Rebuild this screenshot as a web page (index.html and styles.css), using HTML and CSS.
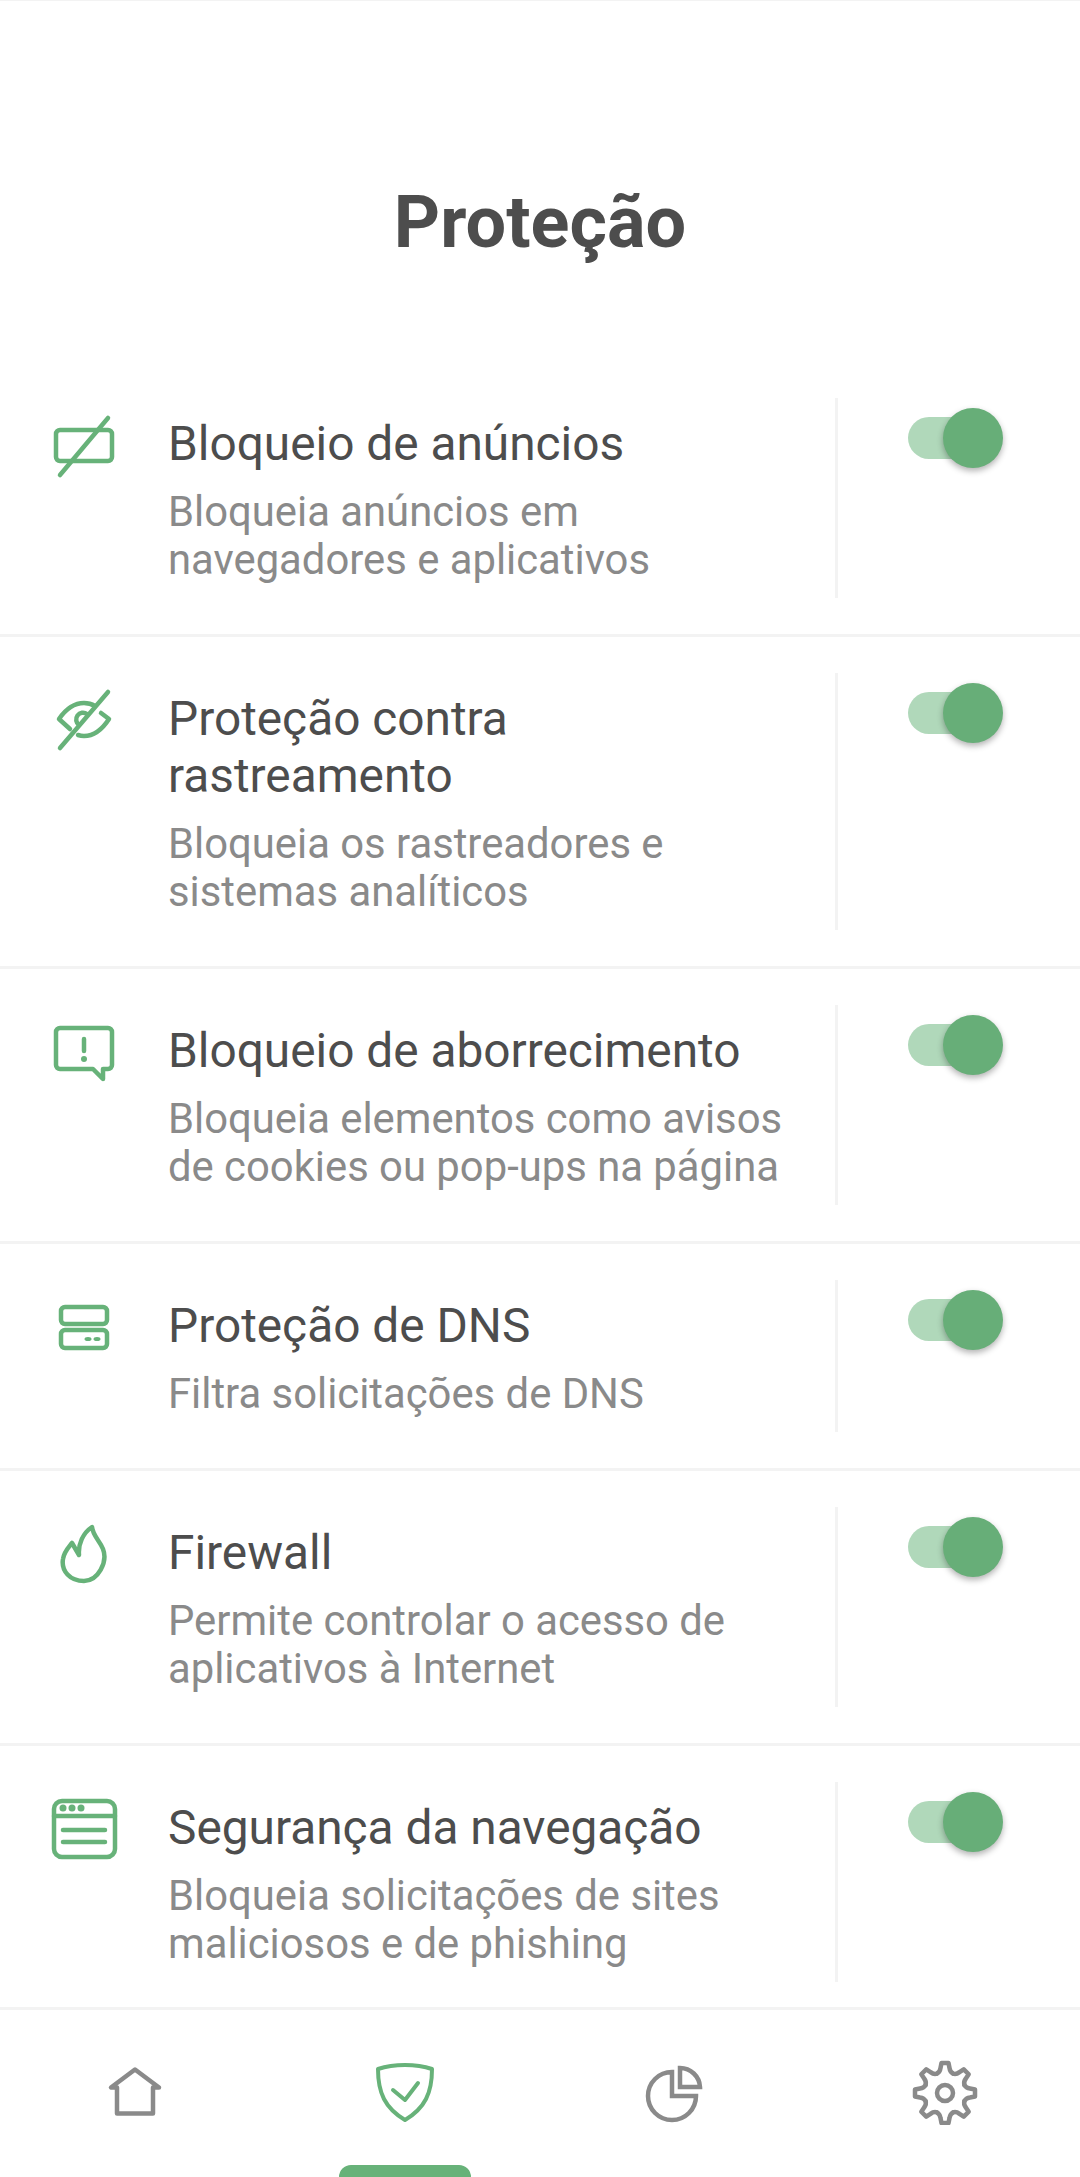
FILE: index.html
```html
<!DOCTYPE html>
<html lang="pt">
<head>
  <meta charset="UTF-8">
  <title>Proteção</title>
  <meta name="viewport" content="width=device-width, initial-scale=1">
  <link rel="stylesheet" href="styles.css">
</head>
<body>

  <div class="screen">
    <h1 class="page-title">Proteção</h1>

    <div class="list">
      <!-- Ad blocking -->
      <div class="row">
        <div class="row-icon">
          <svg class="icon" viewBox="0 0 72 72">
            <rect x="8" y="21" width="56" height="31" rx="4"/>
            <path d="M12 66L60 9"/>
          </svg>
        </div>
        <div class="row-text">
          <div class="row-title">Bloqueio de anúncios</div>
          <div class="row-desc">Bloqueia anúncios em navegadores e aplicativos</div>
        </div>
        <div class="row-switch">
          <div class="switch"><div class="switch-thumb"></div></div>
        </div>
      </div>

      <!-- Tracking -->
      <div class="row">
        <div class="row-icon">
          <svg class="icon" viewBox="0 0 72 72">
            <path d="M22 45L11 35Q22 19 36 19Q42 19 47 22"/>
            <path d="M53 29L61 35Q50 52 36 52Q33 52 30 51"/>
            <path d="M31 41A6.500 6.500 0 0 1 39 30"/>
            <path d="M12 64L60 8"/>
          </svg>
        </div>
        <div class="row-text">
          <div class="row-title">Proteção contra rastreamento</div>
          <div class="row-desc">Bloqueia os rastreadores e sistemas analíticos</div>
        </div>
        <div class="row-switch">
          <div class="switch"><div class="switch-thumb"></div></div>
        </div>
      </div>

      <!-- Annoyances -->
      <div class="row">
        <div class="row-icon">
          <svg class="icon" viewBox="0 0 72 72">
            <path d="M12 12H60A4 4 0 0 1 64 16V49A4 4 0 0 1 60 53H55V63L45 53H12A4 4 0 0 1 8 49V16A4 4 0 0 1 12 12Z"/>
            <path d="M36 23V35"/>
            <circle class="icon-dot" cx="36" cy="43" r="3"/>
          </svg>
        </div>
        <div class="row-text">
          <div class="row-title">Bloqueio de aborrecimento</div>
          <div class="row-desc">Bloqueia elementos como avisos de cookies ou pop-ups na página</div>
        </div>
        <div class="row-switch">
          <div class="switch"><div class="switch-thumb"></div></div>
        </div>
      </div>

      <!-- DNS -->
      <div class="row">
        <div class="row-icon">
          <svg class="icon" viewBox="0 0 72 72">
            <rect x="13" y="16" width="46" height="17" rx="4"/>
            <rect x="13" y="39" width="46" height="18" rx="4"/>
            <ellipse class="icon-dot" cx="40" cy="48" rx="3.500" ry="2"/>
            <ellipse class="icon-dot" cx="49" cy="48" rx="3.500" ry="2"/>
          </svg>
        </div>
        <div class="row-text">
          <div class="row-title">Proteção de DNS</div>
          <div class="row-desc">Filtra solicitações de DNS</div>
        </div>
        <div class="row-switch">
          <div class="switch"><div class="switch-thumb"></div></div>
        </div>
      </div>

      <!-- Firewall -->
      <div class="row">
        <div class="row-icon">
          <svg class="icon" viewBox="0 0 72 72">
            <path d="M24 25L31 37C30 26 35 15 44 9C45 18 52 23 55 31C60 44 50 63 36 63C22 63 13 53 15 41C16 34 20 30 24 25Z"/>
          </svg>
        </div>
        <div class="row-text">
          <div class="row-title">Firewall</div>
          <div class="row-desc">Permite controlar o acesso de aplicativos à Internet</div>
        </div>
        <div class="row-switch">
          <div class="switch"><div class="switch-thumb"></div></div>
        </div>
      </div>

      <!-- Browsing security -->
      <div class="row">
        <div class="row-icon">
          <svg class="icon" viewBox="0 0 72 72">
            <rect x="6" y="8" width="61" height="56" rx="8"/>
            <path d="M6 23H67"/>
            <circle class="icon-dot" cx="15" cy="15" r="3.500"/>
            <circle class="icon-dot" cx="24" cy="15" r="3.500"/>
            <circle class="icon-dot" cx="33" cy="15" r="3.500"/>
            <path d="M15 37H57M15 49H57"/>
          </svg>
        </div>
        <div class="row-text">
          <div class="row-title">Segurança da navegação</div>
          <div class="row-desc">Bloqueia solicitações de sites maliciosos e de phishing</div>
        </div>
        <div class="row-switch">
          <div class="switch"><div class="switch-thumb"></div></div>
        </div>
      </div>
    </div>

    <div class="tabbar">
      <div class="tab">
        <svg class="icon icon-grey" viewBox="0 0 72 72">
          <path d="M12 34.500H18V60.500H54V34.500H60L36 16.500Z"/>
        </svg>
      </div>
      <div class="tab tab-active">
        <svg class="icon icon-shield" viewBox="0 0 72 72">
          <path d="M9 16C18 13 27 12 36 12C45 12 54 13 63 16C63 40 56 55 36 67C16 55 9 40 9 16Z"/>
          <path d="M24 37L36 47L49 30"/>
        </svg>
      </div>
      <div class="tab">
        <svg class="icon icon-grey icon-miter" viewBox="0 0 72 72">
          <path d="M33 19A24 24 0 1 0 57 43H33Z"/>
          <path d="M41 15A20 20 0 0 1 61 34H41Z"/>
        </svg>
      </div>
      <div class="tab">
        <svg class="icon icon-grey" viewBox="0 0 72 72">
          <defs>
            <path id="gearTooth" d="M27.960 20.600Q31 19 31.500 15L32.500 10H39.500L40.500 15Q41 19 44.040 20.600"/>
          </defs>
          <use href="#gearTooth"/>
          <use href="#gearTooth" transform="rotate(45 36 40)"/>
          <use href="#gearTooth" transform="rotate(90 36 40)"/>
          <use href="#gearTooth" transform="rotate(135 36 40)"/>
          <use href="#gearTooth" transform="rotate(180 36 40)"/>
          <use href="#gearTooth" transform="rotate(225 36 40)"/>
          <use href="#gearTooth" transform="rotate(270 36 40)"/>
          <use href="#gearTooth" transform="rotate(315 36 40)"/>
          <circle cx="36" cy="40" r="8"/>
        </svg>
      </div>
    </div>
  </div>

</body>
</html>
```

FILE: styles.css
```css
* {
  margin: 0;
  padding: 0;
  box-sizing: border-box;
}

body {
  font-family: Roboto, "Liberation Sans", sans-serif;
  background: #fff;
  color: #4d4d4d;
}

.screen {
  height: 2177px;
  display: flex;
  flex-direction: column;
  overflow: hidden;
  border-top: 1px solid #f3f3f3;
}

.page-title {
  height: 361px;
  padding-top: 180px;
  font-size: 72px;
  line-height: 84px;
  font-weight: 700;
  text-align: center;
}

.list {
  flex: 1;
  overflow: hidden;
}

.row {
  display: flex;
  padding: 36px 0;
  border-bottom: 3px solid #f3f3f3;
}

.row-icon {
  width: 168px;
  padding: 11px 0 0 48px;
  flex-shrink: 0;
}

.icon {
  display: block;
  width: 72px;
  height: 72px;
  fill: none;
  stroke: #67b279;
  stroke-width: 4.500;
  stroke-linecap: round;
  stroke-linejoin: round;
}

.icon-grey {
  stroke: #8a8a8a;
}

.icon-shield {
  stroke-width: 4;
}

.icon-miter {
  stroke-linejoin: miter;
  stroke-linecap: butt;
}

.icon-dot {
  fill: #67b279;
  stroke: none;
}

.row-text {
  width: 670px;
  padding: 18px 42px 14px 0;
  border-right: 3px solid #f3f3f3;
}

.row-title {
  font-size: 47.800px;
  line-height: 57px;
  margin-bottom: 15px;
}

.row-desc {
  font-size: 41.800px;
  line-height: 48px;
  color: #8a8a8a;
}

.row-switch {
  padding: 19px 0 0 70px;
}

.switch {
  position: relative;
  width: 90px;
  height: 42px;
  border-radius: 21px;
  background: #b0d8ba;
}

.switch-thumb {
  position: absolute;
  top: -9px;
  left: 35px;
  width: 60px;
  height: 60px;
  border-radius: 50%;
  background: #67ae78;
  box-shadow: 0 3px 6px rgba(0, 0, 0, 0.3);
}

.tabbar {
  height: 170px;
  flex-shrink: 0;
  display: flex;
  background: #fff;
  border-top: 3px solid #f3f3f3;
}

.tab {
  position: relative;
  flex: 1;
  display: flex;
  justify-content: center;
  padding-top: 43px;
}

.tab-active::after {
  content: "";
  position: absolute;
  left: 69px;
  bottom: 0;
  width: 132px;
  height: 12px;
  border-radius: 12px 12px 0 0;
  background: #67b279;
}
```
